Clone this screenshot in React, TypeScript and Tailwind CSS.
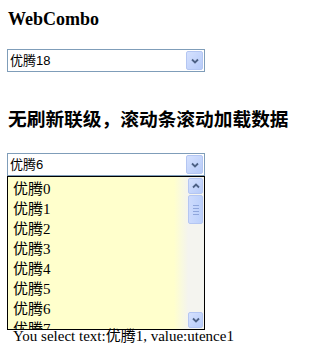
import React from "react";

const serif = { fontFamily: '"Liberation Serif", "Noto Sans CJK SC", serif' };
const sans = { fontFamily: '"Liberation Sans", "Noto Sans CJK SC", sans-serif' };

const Chevron: React.FC<{ up?: boolean }> = ({ up }) => (
  <svg width="8" height="6" viewBox="0 0 8 6" className="block">
    <path
      d={up ? "M1 4.5 L4 1.5 L7 4.5" : "M1 1.5 L4 4.5 L7 1.5"}
      fill="none"
      stroke="#4d6185"
      strokeWidth="1.8"
    />
  </svg>
);

const XpButton: React.FC<{ up?: boolean; className?: string }> = ({ up, className = "" }) => (
  <div
    className={`flex items-center justify-center rounded-[2px] border border-[#b4c6f2] bg-gradient-to-br from-[#d5e1fe] to-[#b7cbf9] ${className}`}
  >
    <Chevron up={up} />
  </div>
);

const Combo: React.FC<{ value: string; className?: string }> = ({ value, className = "" }) => (
  <div className={`flex h-[23px] w-[198px] items-center border border-[#7f9db9] bg-white ${className}`}>
    <span className="flex-1 pl-[2px] text-[13px] leading-none text-black" style={sans}>
      {value}
    </span>
    <XpButton className="mr-px h-[19px] w-[17px]" />
  </div>
);

// only the rows that show in the scrolled window
const items = ["优腾0", "优腾1", "优腾2", "优腾3", "优腾4", "优腾5", "优腾6", "优腾7"];

const ListBox: React.FC = () => (
  <div className="flex h-[154px] w-[198px] border border-black bg-[#ffffcc]">
    <div className="flex-1 overflow-hidden pl-[5px] pt-[2px]" style={serif}>
      {items.map((it) => (
        <div key={it} className="text-[15px] leading-[20px] text-black">
          {it}
        </div>
      ))}
    </div>
    <div className="w-[14px] bg-gradient-to-r from-[#ffffcc] to-[#f4f4ee]" />
    <div className="flex w-[16px] flex-col bg-[#f4f4ef] py-px pr-px">
      <XpButton up className="h-[16px] w-[15px]" />
      <div className="mt-[1px] flex h-[29px] w-[15px] flex-col items-center justify-center gap-[2px] rounded-[2px] border border-[#b4c6f2] bg-gradient-to-r from-[#cddbfd] to-[#bcd0fb]">
        <div className="h-px w-[6px] bg-[#8fa6dc]" />
        <div className="h-px w-[6px] bg-[#8fa6dc]" />
        <div className="h-px w-[6px] bg-[#8fa6dc]" />
        <div className="h-px w-[6px] bg-[#8fa6dc]" />
      </div>
      <div className="flex-1" />
      <XpButton className="h-[16px] w-[15px]" />
    </div>
  </div>
);

export default function App() {
  return (
    <div className="min-h-screen bg-white px-[7px] pt-2 text-black" style={serif}>
      <h3 className="pl-px text-[18px] font-bold leading-[22px]">WebCombo</h3>
      <Combo value="优腾18" className="mt-[19px]" />
      <h3 className="mt-[38px] pl-px text-[18.72px] font-bold leading-[20px]">
        无刷新联级，滚动条滚动加载数据
      </h3>
      <Combo value="优腾6" className="mt-[23px]" />
      <ListBox />
      <p className="pl-[6px] text-[15px] leading-[12px]">You select text:优腾1, value:utence1</p>
    </div>
  );
}
